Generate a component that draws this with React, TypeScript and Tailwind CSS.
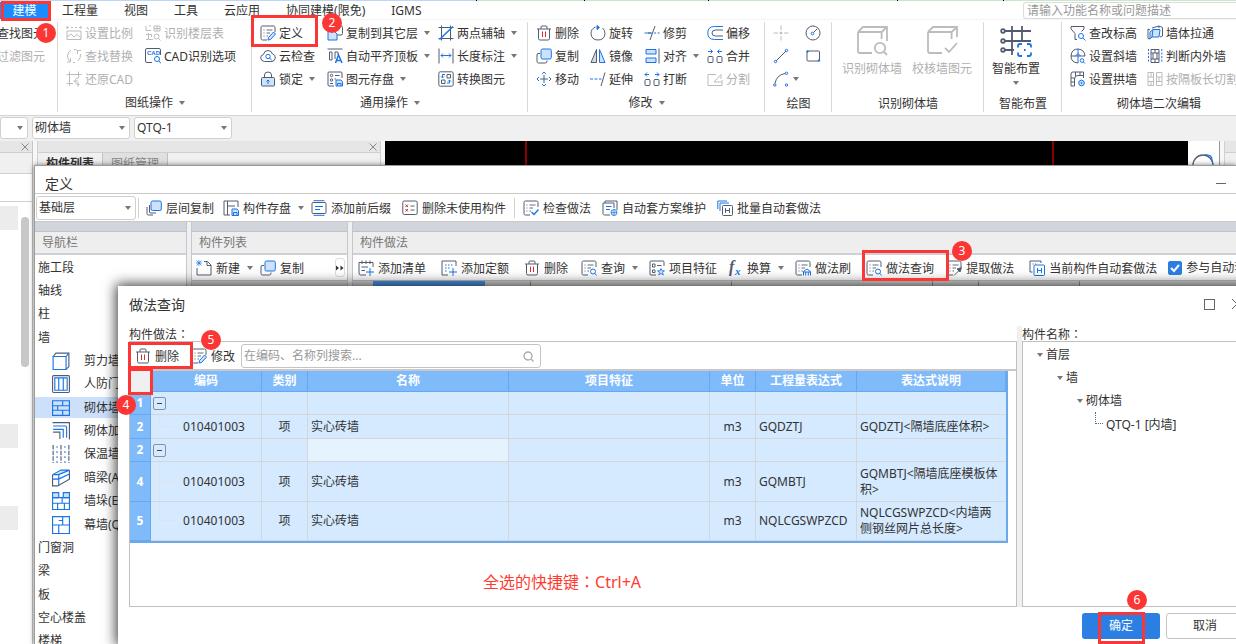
import React from "react";
import type { ReactNode } from "react";

const D = "#525c70";
const B = "#1a73e8";
const L = "#cfe2fb";
const G = "#bcbcbc";
const R = "#e02b2b";

const listFrame = (
  <>
    <path d="M15 7V2.500Q15 1 13.500 1H2.500Q1 1 1 2.500V13.500Q1 15 2.500 15H7" stroke={D} />
    <path d="M3.500 5H4.500M6.500 5H12.500M3.500 8H4.500M6.500 8H10M3.500 11H4.500M6.500 11H8" stroke={D} strokeWidth="0.900" />
  </>
);

const magnifier = (
  <>
    <circle cx="11" cy="11" r="2.500" stroke={B} />
    <path d="M13 13L15.500 15.500" stroke={B} />
  </>
);

const icons: Record<string, ReactNode> = {
  scale: (
    <g stroke={G}>
      <path d="M1 1V4M15 1V4M1 2.500H3M5 2.500H7M9 2.500H11M13 2.500H15M1 6H15V14.500H1ZM1 12L5 9L8 12L11 9.500L15 13" />
    </g>
  ),
  replace: (
    <g stroke={G}>
      <path d="M5 2Q1.500 4 1.500 8Q1.500 11 4 13.500M4.500 10V14H1M8 1.500Q10 1.500 11.500 2.500M14.500 6Q15 10 12 13M15 2.500H11.500V6M7 14.500H9" />
    </g>
  ),
  restore: (
    <g stroke={G}>
      <path d="M3.500 0.500V15M12.500 0.500V7M0.500 3.500H15.500M0.500 12.500H7M13 6.500Q9 7 9 10Q9 13.500 13.500 13.500M7.500 10H12M12 15.500V11" />
    </g>
  ),
  floorTable: (
    <g stroke={G}>
      <path d="M1 1V5.500H6M4 1H6M9 1H15V6H9ZM12 1V6M9 3.500H15M3.500 8V14.500H8M1 9.500H6.500V12M1 14.500H3" />
      <circle cx="11.500" cy="11.500" r="2.500" />
      <path d="M13.500 13.500L15.500 15.500" />
    </g>
  ),
  cadOption: (
    <>
      <path d="M15.500 7V2Q15.500 0.500 14 0.500H2Q0.500 0.500 0.500 2V13Q0.500 14.500 2 14.500H7" stroke={D} />
      <text x="2" y="7" fontSize="6" fontWeight="700" fill={B} fontFamily="Liberation Sans, sans-serif">CAD</text>
      <circle cx="12" cy="11" r="2.500" stroke={B} />
      <path d="M14 13L16 15.500" stroke={B} />
    </>
  ),
  define: (
    <>
      {listFrame}
      <path d="M8 15L8.500 12.500L13.500 7L15.500 9L10.500 14.500Z" stroke={B} fill={L} />
    </>
  ),
  cloud: (
    <>
      <path d="M4.500 13.500Q0.700 13 0.700 9.800Q0.700 7 3.500 6.500Q4 2.500 8 2.500Q11.500 2.500 12.500 6Q15.500 6.800 15.300 10Q15 13 12 13.500Z" stroke={D} />
      <circle cx="8" cy="8.500" r="2.200" stroke={B} />
      <path d="M9.500 10L12 12.500" stroke={B} />
    </>
  ),
  lock: (
    <>
      <path d="M4.500 6.500V4Q4.500 1 8 1Q11.500 1 11.500 4V6.500" stroke={D} />
      <rect x="1.500" y="6.500" width="13" height="8.500" rx="1" stroke={D} fill={L} />
      <path d="M8 13V9.500M6.500 10.500L8 9L9.500 10.500" stroke={B} />
    </>
  ),
  copyTo: (
    <>
      <rect x="5.500" y="1" width="10" height="9" rx="1.500" stroke={D} />
      <path d="M1 6H7L10 9V15H1Z" stroke={B} fill={L} />
    </>
  ),
  alignTop: (
    <>
      <path d="M0.500 1H15.500" stroke={D} />
      <path d="M2.500 4H5V12H2.500ZM8 11V4H11V7" stroke={D} />
      <path d="M8.500 15L11.500 7L15 15M9.500 12.500H13.500" stroke={B} strokeWidth="1.500" />
    </>
  ),
  saveDisk: (
    <>
      <path d="M15 7V2Q15 1 14 1H2Q1 1 1 2V14Q1 15 2 15H7" stroke={D} />
      <circle cx="4.500" cy="4.500" r="1.200" stroke={D} />
      <circle cx="4.500" cy="9" r="1.200" stroke={D} />
      <path d="M8 4.500H12.500M7.500 8H9M3 12.500H6" stroke={D} />
      <path d="M9 9H14L15.500 10.500V15H9ZM10.500 15V12.500H14V15" stroke={B} fill={L} />
    </>
  ),
  axis: (
    <>
      <path d="M3.500 0.500V15.500M12.500 0.500V15.500M0.500 2.500H15.500M0.500 13.500H15.500" stroke={D} />
      <path d="M1.500 14.500L15 1.500" stroke={B} strokeWidth="1.500" />
    </>
  ),
  length: (
    <>
      <path d="M1 0.500V15.500M15 0.500V15.500" stroke={D} />
      <path d="M3 7.500H13M5 5.500L3 7.500L5 9.500M11 5.500L13 7.500L11 9.500" stroke={B} />
    </>
  ),
  convert: (
    <>
      <rect x="0.800" y="0.800" width="14.400" height="14.400" rx="1.500" stroke={D} />
      <path d="M9 3.500H12.500V7H9ZM3.500 9H7V12.500H3.500Z" stroke={D} />
      <path d="M7 3.500H4.500V6.500M3 5.500L4.500 7L6 5.500M9 12H11.500V9.500M10 10.500L11.500 9L13 10.500" stroke={B} />
    </>
  ),
  trash: (
    <>
      <path d="M1 4H15M5 4V2Q5 1 6 1H10Q11 1 11 2V4M2.500 4V13.500Q2.500 15 4 15H12Q13.500 15 13.500 13.500V4" stroke={D} />
      <path d="M6.500 6.500V12M9.500 6.500V12" stroke={R} />
    </>
  ),
  copy: (
    <>
      <path d="M4 5.500H2Q1 5.500 1 7V13.500Q1 15 2.500 15H9.500Q11 15 11 13V12.500" stroke={D} />
      <rect x="5" y="1" width="10.300" height="10" rx="1.500" stroke={B} fill={L} />
    </>
  ),
  move: (
    <>
      <path d="M8 4V12M4 8H12" stroke={D} />
      <path d="M6 3L8 1L10 3M6 13L8 15L10 13M3 6L1 8L3 10M13 6L15 8L13 10" stroke={B} />
    </>
  ),
  rotate: (
    <>
      <path d="M5.500 2Q1 3.800 1 8.500Q1.500 15 8 15Q14.500 15 15 8.500Q15 5 12.500 3" stroke={D} />
      <path d="M7 0.500L9.500 2.500L7 4.500Z" fill={B} stroke={B} />
    </>
  ),
  mirror: (
    <>
      <path d="M6.500 1.500V14.500H1Z" stroke={D} fill="#d5d9e0" />
      <path d="M9.500 1.500V14.500H15Z" stroke={B} fill={L} />
    </>
  ),
  trim: (
    <>
      <path d="M4 8H8M11 1L6 15" stroke={D} />
      <path d="M10 8H12M13.500 8H15.500M0.500 8H7" stroke={B} />
    </>
  ),
  extend: (
    <>
      <path d="M0 8H3M4.500 8H7.500M9 8H11.500" stroke={B} />
      <path d="M15 1.500L11 15" stroke={D} />
    </>
  ),
  alignRight: (
    <>
      <path d="M2 1.500H12V6H2ZM2 10H12V14.500H2Z" stroke={B} fill={L} />
      <path d="M15 0.500V15.500" stroke={D} />
    </>
  ),
  breakUp: (
    <>
      <rect x="1" y="8.500" width="5" height="6" rx="1" stroke={D} />
      <rect x="10" y="8.500" width="5" height="6" rx="1" stroke={D} />
      <path d="M1 3.500H5M3 1.500L1 3.500L3 5.500M11 3.500H15M13 1.500L15 3.500L13 5.500" stroke={B} />
    </>
  ),
  offset: (
    <>
      <path d="M16 1.500H7.500Q0.800 1.500 0.800 8Q0.800 14.500 7.500 14.500H16" stroke={B} />
      <path d="M16 5H8.500Q5 5 5 8Q5 11 8.500 11H16" stroke={D} />
    </>
  ),
  merge: (
    <>
      <rect x="1" y="8.500" width="5" height="6" rx="1" stroke={D} />
      <rect x="10" y="8.500" width="5" height="6" rx="1" stroke={D} />
      <path d="M1 3.500H5.500M3.500 1.500L5.500 3.500L3.500 5.500M10.500 3.500H15M12.500 1.500L10.500 3.500L12.500 5.500" stroke={B} />
    </>
  ),
  split: (
    <g stroke={G}>
      <path d="M9 3.500H1V14.500H15V9M7 11L14 3.500M7 11L14.500 11M14 3.500V8" />
    </g>
  ),
  point: (
    <g stroke={G}>
      <path d="M8 0.500V5M8 11V15.500M0.500 8H5M11 8H15.500" />
      <circle cx="8" cy="8" r="1" fill={G} />
    </g>
  ),
  circle: (
    <>
      <circle cx="8" cy="8" r="7" stroke={D} />
      <path d="M8.500 7.500L12 4" stroke={D} />
      <circle cx="7.500" cy="8.500" r="1.300" stroke={B} />
    </>
  ),
  line: (
    <>
      <path d="M3 13L13 3" stroke={D} />
      <circle cx="2.500" cy="13.500" r="1.200" stroke={B} />
      <circle cx="13.500" cy="2.500" r="1.200" stroke={B} />
    </>
  ),
  rect: (
    <>
      <rect x="2" y="3" width="12.500" height="10" rx="1" stroke={D} />
      <circle cx="2.500" cy="3.500" r="0.800" stroke={B} fill={B} />
      <circle cx="14" cy="12.500" r="0.800" stroke={B} fill={B} />
    </>
  ),
  arc: (
    <>
      <path d="M2 12.500Q3.500 4 12 2.500" stroke={D} />
      <circle cx="1.800" cy="14" r="1.200" stroke={B} />
      <circle cx="13.500" cy="2.300" r="1.200" stroke={B} />
      <circle cx="13.500" cy="14" r="1.200" stroke={B} />
    </>
  ),
  recogWall: (
    <g stroke={G} strokeWidth="0.900">
      <path d="M1 3.500L3.500 1H15.500V8M1 3.500H12.800M1 3.500V13Q1 14 2 14H8M12.800 7V3.500L15.500 1" />
      <circle cx="12" cy="11.500" r="2.600" />
      <path d="M14 13.500L15.500 15" />
    </g>
  ),
  checkWall: (
    <g stroke={G} strokeWidth="0.900">
      <path d="M1 3.500L3.500 1H15.500V6M1 3.500H12.800M1 3.500V13Q1 14 2 14H8M12.800 7V3.500L15.500 1M9.500 11.500L11.500 13.500L15.500 9" />
    </g>
  ),
  smart: (
    <>
      <g stroke={D} strokeWidth="0.900">
        <path d="M2.500 3H15.500M2.500 8H15.500M2.500 12.500H7M6 0.500V15M11 0.500V8" />
        <circle cx="1.500" cy="3" r="0.900" fill="#fff" />
        <circle cx="1.500" cy="8" r="0.900" fill="#fff" />
        <circle cx="1.500" cy="12.500" r="0.900" fill="#fff" />
      </g>
      <path d="M9 11.300V10.500Q9 9.500 10 9.500H11M13.500 9.500H14.500Q15.500 9.500 15.500 10.500V11.300M15.500 13.700V14.500Q15.500 15.500 14.500 15.500H13.500M11 15.500H10Q9 15.500 9 14.500V13.700M12 12.500H12.800" stroke={B} strokeWidth="0.900" />
    </>
  ),
  funnel: (
    <>
      <path d="M7 14.500H5V8.500L1 4V1.500H14V4L11.500 6.500" stroke={D} />
      {magnifier}
    </>
  ),
  slope: (
    <>
      <path d="M8 15Q1 14.500 1 8Q1.500 1 8 1Q14.500 1.500 15 8" stroke={D} />
      <path d="M1 8H15" stroke={D} />
      <path d="M8 1V15M5.500 8L8 5.500L10.500 8" stroke={B} />
      <circle cx="12" cy="12.500" r="1.800" stroke={B} fill="#fff" />
      <path d="M13.500 14L15 15.500" stroke={B} />
    </>
  ),
  arch: (
    <>
      <path d="M1 15V3Q1 1 3 1H13.500V7M4.500 15V8Q4.500 4.500 8 4.500H13.500M1 7H4.500M1 11H4.500M1 15H4.500M5.500 1V5M10 1V4.500" stroke={D} />
      <circle cx="11.500" cy="12" r="2.800" stroke={B} fill={L} />
      <circle cx="11.500" cy="12" r="0.600" stroke={B} />
    </>
  ),
  wallThrough: (
    <>
      <path d="M3 5L1 4V13.500L3 14M12 3V1L15.500 2.500V11L13 12M5 3L12 1" stroke={D} />
      <path d="M3 7L6 4.500H13L12 12H5L3 14ZM6 4.500L5 12" stroke={B} fill={L} />
    </>
  ),
  judge: (
    <>
      <path d="M4 1.500H12V14.500H4ZM4 5H12M4 11H12M8 1.500V5M8 11V14.500M6 5V11M10 5V11" stroke={D} />
      <path d="M1.500 1V15M14.800 1V15" stroke={B} strokeDasharray="2 1.500" />
    </>
  ),
  cutLength: (
    <g stroke={G}>
      <path d="M1 1.500H6.500V14.500H1ZM9.500 1.500H15V14.500H9.500ZM1 6H6.500M1 10.500H6.500M9.500 6H15M9.500 10.500H15M4 1.500V6M12 6V10.500M4 10.500V14.500" />
    </g>
  ),
  layerCopy: (
    <>
      <path d="M3.500 5V12Q3.500 13 5 13H10M1 7V13.500Q1 15 2.500 15H7" stroke={D} />
      <rect x="5" y="1" width="10.300" height="9.500" rx="1.500" stroke={B} fill={L} />
    </>
  ),
  compSave: (
    <>
      <path d="M15 7V1H1V15H7M4.500 1V15M4.500 6H12" stroke={D} />
      <path d="M9 9H14L15.500 10.500V15.500H9ZM10.500 15V12.500H14V15" stroke={B} fill={L} />
    </>
  ),
  prefix: (
    <>
      <rect x="1" y="2.500" width="14" height="11" rx="1" stroke={D} />
      <path d="M2.500 0.700H13.500M2.500 15.300H13.500M4 6.500H12M4 9.500H9" stroke={B} />
    </>
  ),
  delUnused: (
    <>
      <rect x="0.800" y="1" width="14.400" height="13.500" rx="1.500" stroke={D} />
      <path d="M3.500 4.500L6 7M6 4.500L3.500 7M3.500 9L6 11.500M6 9L3.500 11.500" stroke={R} />
      <path d="M8.500 6H12.500M8.500 10H12.500" stroke={D} />
    </>
  ),
  checkMethod: (
    <>
      {listFrame}
      <path d="M8.500 12L11 14.500L15.500 9.500" stroke={B} strokeWidth="1.400" />
    </>
  ),
  autoPlan: (
    <>
      <path d="M3 3V1H15V10M8 15H2.500Q1 15 1 13.500V3H12V8" stroke={D} />
      <path d="M4 6.500H9.500M4 9.500H8" stroke={B} />
      <circle cx="12" cy="12.500" r="3" stroke={B} fill={L} strokeWidth="0.800" />
      <path d="M9 12.500H15M12 9.500V15.500" stroke={B} strokeWidth="0.600" />
    </>
  ),
  batch: (
    <>
      <path d="M0.800 9V1H10M3 11V3H12" stroke={B} />
      <rect x="5.500" y="5.500" width="10" height="10" rx="1" stroke={D} />
      <path d="M8.500 8V13M12.500 8V13M8.500 10.500H12.500" stroke={D} />
    </>
  ),
  newFile: (
    <>
      <path d="M8 1.500H11.500L15 5V15H1V8M11 1.500V5.500H15" stroke={D} />
      <path d="M0.500 0.500L5.500 5.500M5.500 0.500L0.500 5.500M3 0V6M0 3H6" stroke={B} strokeWidth="0.700" />
    </>
  ),
  addList: (
    <>
      <path d="M8 15H2.500Q1 15 1 13V2.500H15V7M4 0.500V4M8 0.500V4M12 0.500V4M3.500 7H10M3.500 10.500H7" stroke={D} />
      <path d="M12 8V16M8 12H16" stroke={B} />
    </>
  ),
  addQuota: (
    <>
      <path d="M7 15H1V1H15V6" stroke={D} />
      <path d="M4 5H12M4 8H9M4 11H7" stroke={B} strokeDasharray="1.500 1.500" />
      <path d="M12 8V16M8 12H16" stroke={B} />
    </>
  ),
  query: (
    <>
      {listFrame}
      <circle cx="12" cy="11.500" r="2.500" stroke={B} fill="#fff" />
      <path d="M14 13.500L15.500 15.500" stroke={B} />
    </>
  ),
  feature: (
    <>
      <path d="M15 6V2Q15 1 14 1H2Q1 1 1 2V14Q1 15 2 15H7M3.500 4H6V7H3.500ZM3.500 10H6V12.500H3.500ZM8 5.500H12.500" stroke={D} />
      <path d="M12 8.500L13 10.800H15.500L13.500 12.300L14.300 15L12 13.500L9.700 15L10.500 12.300L8.500 10.800H11Z" stroke={B} fill={L} strokeWidth="0.800" />
    </>
  ),
  fx: (
    <>
      <text x="2" y="12" fontSize="16" fontStyle="italic" fontWeight="700" fill={D} fontFamily="Liberation Serif, serif">f</text>
      <text x="8" y="15" fontSize="11" fontStyle="italic" fontWeight="700" fill={B} fontFamily="Liberation Serif, serif">x</text>
    </>
  ),
  brush: (
    <>
      {listFrame}
      <path d="M8.500 15.500V11.500L12 9L15.500 11.500V15.500M8.500 12H15.500M10.700 12V15.500M13.300 12V15.500" stroke={B} />
    </>
  ),
  extract: (
    <>
      {listFrame}
      <path d="M8 15.500L12.500 11M11 9L14 12L15.500 7.500Z" stroke={D} fill={D} />
    </>
  ),
  currentAuto: (
    <>
      <path d="M3.500 12H1V1H12V3M3.500 4H4.500M6 4H7" stroke={D} />
      <rect x="5" y="5" width="10.500" height="10.500" rx="1" stroke={B} fill="#fff" />
      <path d="M8.500 8V13M12.500 8V13M8.500 10.500H12.500" stroke={B} />
    </>
  ),
  shearWall: (
    <>
      <path d="M1 4L3.500 1H15V13L12.500 15.500" stroke={D} />
      <path d="M1 4H12.500V15.500H1ZM12.500 4L15 1" stroke={B} />
    </>
  ),
  civilWall: (
    <>
      <rect x="0.500" y="0.500" width="15" height="15" rx="1" stroke={D} />
      <path d="M2.500 2.500H13.500V13.500H2.500ZM6 2.500V13.500M10 2.500V13.500" stroke={B} />
    </>
  ),
  masonry: (
    <path d="M0.500 1.500H15.500V14.500H0.500ZM0.500 6H15.500M0.500 10H15.500M9.500 1.500V6M5 6V10M9.500 10V14.500" stroke={B} />
  ),
  masonryBar: (
    <>
      <path d="M0.500 0.500H15.500V15.500" stroke={D} />
      <path d="M1 3.500H12Q13 3.500 13 5V14M1 6.500H10V14" stroke={B} />
      <path d="M1 9H7V15" stroke={D} />
    </>
  ),
  insulation: (
    <>
      <path d="M1 0V16M8 0V16M15 0V16" stroke={D} strokeDasharray="4 1" />
      <path d="M4.500 1V16M11.500 1V16" stroke={B} strokeDasharray="1.500 3" />
    </>
  ),
  hiddenBeam: (
    <>
      <path d="M0.500 5V15H5L15.500 9V1" stroke={D} />
      <path d="M0.500 5L8 1H15.500L6 5ZM0.500 9H6L15.500 4.500M6 5V15" stroke={B} fill={L} />
    </>
  ),
  pier: (
    <>
      <path d="M0.500 0.500H6V5H0.500ZM10 0.500H15.500V5H10Z" fill={L} stroke={B} />
      <path d="M0.500 5H15.500V15.500H0.500ZM0.500 10H15.500M9 5V10M5 10V15.500M11 10V15.500" stroke={B} />
    </>
  ),
  curtain: (
    <path d="M0.500 0.500H15.500V15.500H0.500ZM0.500 8H15.500M9.500 0.500V8M6 8V15.500M6 4H9.500" stroke={B} />
  ),
};

const Icon = ({ name, className = "size-4" }: { name: string; className?: string }) => (
  <svg viewBox="0 0 16 16" fill="none" strokeWidth="1" className={`shrink-0 ${className}`} aria-hidden="true">
    {icons[name]}
  </svg>
);

const Arrow = ({ className = "" }: { className?: string }) => (
  <svg viewBox="0 0 6 4" className={`h-1 w-1.5 shrink-0 ${className}`} fill="#777" aria-hidden="true">
    <path d="M0 0H6L3 4Z" />
  </svg>
);

type Tool = { icon?: string; label: string; off?: boolean; menu?: boolean; gap?: string };

const RibbonButton = ({ icon, label, off, menu }: Tool) => (
  <button
    type="button"
    disabled={off}
    className={`flex h-[23px] items-center whitespace-nowrap ${off ? "text-[#b0b0b0]" : "text-[#333]"}`}
  >
    {icon && <Icon name={icon} />}
    <span className="mt-0.5 ml-[3px]">{label}</span>
    {menu && <Arrow className="ml-1.5" />}
  </button>
);

type Column = { width: string; items: Tool[] };

const drawing: Column[] = [
  {
    width: "w-[79px]",
    items: [
      { icon: "scale", label: "设置比例", off: true },
      { icon: "replace", label: "查找替换", off: true },
      { icon: "restore", label: "还原CAD", off: true },
    ],
  },
  {
    width: "w-[100px]",
    items: [
      { icon: "floorTable", label: "识别楼层表", off: true },
      { icon: "cadOption", label: "CAD识别选项" },
    ],
  },
];

const common: Column[] = [
  {
    width: "w-[67px]",
    items: [
      { icon: "define", label: "定义" },
      { icon: "cloud", label: "云检查" },
      { icon: "lock", label: "锁定", menu: true },
    ],
  },
  {
    width: "w-[111px]",
    items: [
      { icon: "copyTo", label: "复制到其它层", menu: true },
      { icon: "alignTop", label: "自动平齐顶板", menu: true },
      { icon: "saveDisk", label: "图元存盘", menu: true },
    ],
  },
  {
    width: "w-[84px]",
    items: [
      { icon: "axis", label: "两点辅轴", menu: true },
      { icon: "length", label: "长度标注", menu: true },
      { icon: "convert", label: "转换图元" },
    ],
  },
];

const modify: Column[] = [
  {
    width: "w-[54px]",
    items: [
      { icon: "trash", label: "删除" },
      { icon: "copy", label: "复制" },
      { icon: "move", label: "移动" },
    ],
  },
  {
    width: "w-[54px]",
    items: [
      { icon: "rotate", label: "旋转" },
      { icon: "mirror", label: "镜像" },
      { icon: "extend", label: "延伸" },
    ],
  },
  {
    width: "w-[63px]",
    items: [
      { icon: "trim", label: "修剪" },
      { icon: "alignRight", label: "对齐", menu: true },
      { icon: "breakUp", label: "打断" },
    ],
  },
  {
    width: "w-[50px]",
    items: [
      { icon: "offset", label: "偏移" },
      { icon: "merge", label: "合并" },
      { icon: "split", label: "分割", off: true },
    ],
  },
];

const masonryEdit: Column[] = [
  {
    width: "w-[77px]",
    items: [
      { icon: "funnel", label: "查改标高" },
      { icon: "slope", label: "设置斜墙" },
      { icon: "arch", label: "设置拱墙" },
    ],
  },
  {
    width: "w-[110px]",
    items: [
      { icon: "wallThrough", label: "墙体拉通" },
      { icon: "judge", label: "判断内外墙" },
      { icon: "cutLength", label: "按隔板长切割", off: true },
    ],
  },
];

const Group = ({
  width,
  label,
  menu,
  children,
}: {
  width: string;
  label: string;
  menu?: boolean;
  children: ReactNode;
}) => (
  <section className={`relative flex shrink-0 flex-col pl-2 ${width}`}>
    <div className="flex h-[70px] pt-px">{children}</div>
    <div className={`flex h-6 items-center justify-center pr-2 text-[#333] ${menu ? "pt-0.5" : "pt-1"}`}>
      {label}
      {menu && <Arrow className="ml-1.5" />}
    </div>
    <div className="absolute top-0.5 right-0 h-[90px] w-px bg-[#d9d9d9]" />
  </section>
);

const Columns = ({ columns }: { columns: Column[] }) => (
  <>
    {columns.map((col, i) => (
      <div key={i} className={`flex shrink-0 flex-col ${col.width}`}>
        {col.items.map((item) => (
          <RibbonButton key={item.label} {...item} />
        ))}
      </div>
    ))}
  </>
);

const BigButton = ({ icon, label, off, menu }: Tool) => (
  <button
    type="button"
    disabled={off}
    className={`flex flex-col items-center pt-1 whitespace-nowrap ${off ? "text-[#b0b0b0]" : "text-[#333]"}`}
  >
    <Icon name={icon!} className="size-8" />
    <span className="mt-0.5 leading-5">{label}</span>
    {menu && <Arrow className="mt-0.5" />}
  </button>
);

const DrawButton = ({ icon, label, menu }: Tool) => (
  <button type="button" aria-label={label} className="flex h-[23px] items-center">
    <Icon name={icon!} />
    {menu && <Arrow className="ml-1" />}
  </button>
);

const SelectBox = ({ label, value, className }: { label: string; value: string; className: string }) => (
  <div className={`relative shrink-0 ${className}`}>
    <select
      aria-label={label}
      defaultValue={value}
      className="block h-full w-full appearance-none rounded-[3px] border border-[#d0d0d0] bg-white pl-0.5 text-[#333]"
    >
      <option>{value}</option>
    </select>
    <Arrow className="pointer-events-none absolute top-1/2 right-[5px] -mt-0.5" />
  </div>
);

const menuTabs = ["工程量", "视图", "工具", "云应用", "协同建模(限免)", "IGMS"];

const Ribbon = () => (
  <header className="shrink-0">
    <div className="flex h-px bg-[#c8e6c9]">
      <div className="w-[476px] bg-[#bcd6f5]" />
      <div className="w-[108px] border-l border-black" />
      <div className="w-[124px] border-l border-black" />
      <div className="w-[189px] border-l border-black" />
      <div className="w-[106px] border-l border-black" />
      <div className="flex-1 border-l border-black" />
    </div>
    <div className="flex h-[19px] items-center justify-between border-b border-[#f3f3f3]">
      <nav className="flex h-full pt-px">
        <button type="button" className="h-full w-[49px] bg-[#1a8cff] text-white">
          建模
        </button>
        {menuTabs.map((tab) => (
          <button key={tab} type="button" className="h-full px-[13px] text-[#333]">
            {tab}
          </button>
        ))}
      </nav>
      <input
        aria-label="搜索功能"
        placeholder="请输入功能名称或问题描述"
        className="h-[17px] w-[213px] rounded-l-[3px] border border-r-0 border-[#dcdcdc] bg-white pl-[3px] placeholder:text-[#999]"
      />
    </div>
    <div className="flex h-24 overflow-hidden border-b border-[#d4d4d4]">
      <section className="relative w-[58px] shrink-0 pt-px">
        <div className="-ml-1.5 flex flex-col">
          <RibbonButton label="查找图元" />
          <RibbonButton label="过滤图元" off />
        </div>
        <div className="absolute top-0.5 right-0 h-[90px] w-px bg-[#d9d9d9]" />
      </section>
      <Group width="w-[194px]" label="图纸操作" menu>
        <Columns columns={drawing} />
      </Group>
      <Group width="w-[276px]" label="通用操作" menu>
        <Columns columns={common} />
      </Group>
      <Group width="w-[237px]" label="修改" menu>
        <Columns columns={modify} />
      </Group>
      <Group width="w-[67px]" label="绘图">
        <div className="flex w-8 flex-col">
          <DrawButton icon="point" label="点" />
          <DrawButton icon="line" label="直线" />
          <DrawButton icon="arc" label="圆弧" menu />
        </div>
        <div className="flex flex-col">
          <DrawButton icon="circle" label="圆" />
          <DrawButton icon="rect" label="矩形" />
        </div>
      </Group>
      <Group width="w-[152px]" label="识别砌体墙">
        <div className="flex items-start gap-2.5 pl-0.5">
          <BigButton icon="recogWall" label="识别砌体墙" off />
          <BigButton icon="checkWall" label="校核墙图元" off />
        </div>
      </Group>
      <Group width="w-[78px]" label="智能布置">
        <BigButton icon="smart" label="智能布置" menu />
      </Group>
      <Group width="w-[194px]" label="砌体墙二次编辑">
        <Columns columns={masonryEdit} />
      </Group>
    </div>
    <div className="flex h-[25px] gap-1 bg-[#f0f0f0] pt-px">
      <SelectBox label="楼层" value="" className="h-[22px] w-7" />
      <SelectBox label="构件类型" value="砌体墙" className="h-[22px] w-[98px]" />
      <SelectBox label="构件" value="QTQ-1" className="h-[22px] w-[98px]" />
    </div>
  </header>
);

const CloseMark = () => (
  <svg viewBox="0 0 8 8" className="size-2" stroke="#888" aria-hidden="true">
    <path d="M0.500 0.500L7.500 7.500M7.500 0.500L0.500 7.500" />
  </svg>
);

const Workspace = () => (
  <main className="flex flex-1 overflow-hidden bg-[#f7f7f7]">
    <aside className="w-[33px] shrink-0 border-r border-[#c4c4c4] bg-white">
      <div className="flex h-3 items-center justify-end border-b border-[#cfcfcf] bg-[#e6e6e6] pr-[3px]">
        <CloseMark />
      </div>
      <div className="h-[21px] border-b border-[#cfcfcf] bg-[#f0f0f0]" />
      <div className="h-7 border-b border-[#cfcfcf]" />
      <div className="flex justify-between pr-[3px]">
        <div className="w-[18px] pt-1">
          <div className="h-6 bg-[#ececec]" />
          <div className="mt-[194px] h-6 bg-[#ececec]" />
          <div className="mt-[58px] h-6 bg-[#ececec]" />
        </div>
        <div className="mt-[15px] h-[150px] w-2 rounded-full bg-[#c8c8c8]" />
      </div>
    </aside>
    <section className="ml-1 w-[344px] shrink-0 border-x border-[#d0d0d0] bg-[#f0f0f0]">
      <div className="flex h-3 items-center justify-end border-b border-[#cfcfcf] bg-[#e6e6e6] pr-[3px]">
        <CloseMark />
      </div>
      <div className="flex h-[22px] leading-[22px]">
        <button type="button" className="w-[65px] border-r border-[#c0c0c0] font-bold text-[#333]">
          构件列表
        </button>
        <button type="button" className="w-[65px] border-r border-[#c0c0c0] bg-[#e0e0e0] text-[#888]">
          图纸管理
        </button>
      </div>
    </section>
    <div className="ml-1 flex flex-1 bg-black pl-[140px]">
      <div className="w-[529px] border-x-2 border-[#8b0000]" />
    </div>
    <div className="w-8 border-r border-[#999] bg-white pt-3 pl-1">
      <svg viewBox="0 0 22 22" className="size-[22px]" fill="none" strokeWidth="1.300" aria-hidden="true">
        <circle cx="11" cy="12" r="10" stroke={D} />
        <path d="M13 2Q21 1 20 9" stroke={B} />
      </svg>
    </div>
    <div className="ml-1 w-3 border-l border-[#d0d0d0] bg-[#f0f0f0]">
      <div className="h-3 border-b border-[#cfcfcf] bg-[#e6e6e6]" />
    </div>
  </main>
);

const ToolButton = ({ icon, label, menu, gap = "" }: Tool) => (
  <button type="button" className={`flex h-6 shrink-0 items-center whitespace-nowrap text-[#333] ${gap}`}>
    <Icon name={icon!} />
    <span className="mt-0.5 ml-1">{label}</span>
    {menu && <Arrow className="ml-[7px]" />}
  </button>
);

const methodTools: Tool[] = [
  { icon: "addList", label: "添加清单", gap: "ml-[5px]" },
  { icon: "addQuota", label: "添加定额", gap: "ml-[15px]" },
  { icon: "trash", label: "删除", gap: "ml-[15px]" },
  { icon: "query", label: "查询", menu: true, gap: "ml-[13px]" },
  { icon: "feature", label: "项目特征", gap: "ml-[11px]" },
  { icon: "fx", label: "换算", menu: true, gap: "ml-2.5" },
  { icon: "brush", label: "做法刷", gap: "ml-[11px]" },
  { icon: "query", label: "做法查询", gap: "ml-[15px]" },
  { icon: "extract", label: "提取做法", gap: "ml-3" },
  { icon: "currentAuto", label: "当前构件自动套做法", gap: "ml-[15px]" },
];

const PanelTitle = ({ children }: { children: ReactNode }) => (
  <>
    <div className="h-2.5 border-b border-[#bfc2c8] bg-[#d1d4db]" />
    <h2 className="h-[23px] border-b-2 border-[#cdd0d5] bg-[#eee] pl-[7px] leading-[22px] text-[#777]">
      {children}
    </h2>
  </>
);

const wallTypes = [
  { icon: "shearWall", label: "剪力墙(Q)" },
  { icon: "civilWall", label: "人防门框墙" },
  { icon: "masonry", label: "砌体墙(Q)" },
  { icon: "masonryBar", label: "砌体加筋(Y)" },
  { icon: "insulation", label: "保温墙(Q)" },
  { icon: "hiddenBeam", label: "暗梁(A)" },
  { icon: "pier", label: "墙垛(E)" },
  { icon: "curtain", label: "幕墙(Q)" },
];

const NavText = ({ children }: { children: ReactNode }) => (
  <li className="flex items-center pl-[3px]">{children}</li>
);

const DefineWindow = () => (
  <div className="absolute top-[165px] right-0 bottom-0 left-[34px] flex flex-col overflow-hidden border-t border-l border-[#9c9c9c] bg-white shadow-[0_0_5px_rgba(0,0,0,0.5)]">
    <div className="flex h-7 shrink-0 items-center justify-between border-b border-[#c9c9c9] pt-2 pr-2.5 pl-2.5">
      <h1 className="text-sm leading-5 text-[#333]">定义</h1>
      <button type="button" aria-label="最小化" className="flex h-4 items-center">
        <span className="h-px w-2.5 bg-[#666]" />
      </button>
    </div>
    <div className="flex h-7 shrink-0 items-center border-b border-[#c9c9c9] pl-px">
      <SelectBox label="楼层选择" value="基础层" className="h-6 w-[100px]" />
      <div className="mx-0.5 h-5 w-px bg-[#d0d0d0]" />
      <ToolButton icon="layerCopy" label="层间复制" gap="ml-[5px]" />
      <ToolButton icon="compSave" label="构件存盘" menu gap="ml-[9px]" />
      <ToolButton icon="prefix" label="添加前后缀" gap="ml-[7px]" />
      <ToolButton icon="delUnused" label="删除未使用构件" gap="ml-[11px]" />
      <div className="ml-2 h-5 w-px bg-[#d0d0d0]" />
      <ToolButton icon="checkMethod" label="检查做法" gap="ml-2" />
      <ToolButton icon="autoPlan" label="自动套方案维护" gap="ml-[11px]" />
      <ToolButton icon="batch" label="批量自动套做法" gap="ml-[11px]" />
    </div>
    <div className="flex flex-1 gap-1 overflow-hidden bg-[#f0f0f0]">
      <nav className="w-[152px] shrink-0 border-r border-[#c4c7cc] bg-white">
        <PanelTitle>导航栏</PanelTitle>
        <ul className="grid h-[398px] auto-rows-fr pt-px text-[#333]">
          <NavText>施工段</NavText>
          <NavText>轴线</NavText>
          <NavText>柱</NavText>
          <NavText>墙</NavText>
          {wallTypes.map((wall) => (
            <li
              key={wall.label}
              className={`flex items-center pl-[17px] whitespace-nowrap ${wall.icon === "masonry" ? "my-px bg-[#cce0fa]" : ""}`}
            >
              <Icon name={wall.icon} className="size-[18px]" />
              <span className="ml-[14px]">{wall.label}</span>
            </li>
          ))}
          <NavText>门窗洞</NavText>
          <NavText>梁</NavText>
          <NavText>板</NavText>
          <NavText>空心楼盖</NavText>
          <NavText>楼梯</NavText>
        </ul>
      </nav>
      <section className="w-[157px] shrink-0 border-x border-[#c4c7cc] bg-[#ddd]">
        <PanelTitle>构件列表</PanelTitle>
        <div className="flex h-[26px] items-center border-b border-[#c0c0c0] bg-white pr-0.5 pl-1">
          <ToolButton icon="newFile" label="新建" menu />
          <ToolButton icon="copy" label="复制" gap="ml-[7px]" />
          <button
            type="button"
            aria-label="更多"
            className="ml-auto flex h-[19px] w-2.5 items-center justify-center rounded-[3px] border border-[#ddd]"
          >
            <svg viewBox="0 0 8 6" className="h-1.5 w-2 shrink-0" fill="#333" aria-hidden="true">
              <path d="M0 0.500L3 3L0 5.500ZM4.500 0.500L7.500 3L4.500 5.500Z" />
            </svg>
          </button>
        </div>
      </section>
      <section className="flex-1 overflow-hidden border-l border-[#c4c7cc] bg-[#ddd]">
        <PanelTitle>构件做法</PanelTitle>
        <div className="flex h-[26px] items-center border-b border-[#c0c0c0] bg-white">
          {methodTools.map((tool) => (
            <ToolButton key={tool.label} {...tool} />
          ))}
          <label className="ml-[11px] flex shrink-0 items-center gap-1 whitespace-nowrap text-[#333]">
            <span className="relative flex size-3.5">
              <input
                type="checkbox"
                defaultChecked
                className="peer size-3.5 appearance-none rounded-[2px] border border-[#2b7fe3] checked:bg-[#2b7fe3]"
              />
              <svg
                viewBox="0 0 14 14"
                className="pointer-events-none absolute inset-0 hidden size-3.5 peer-checked:block"
                fill="none"
                stroke="#fff"
                strokeWidth="2"
              >
                <path d="M3 7L6 10L11 4" />
              </svg>
            </span>
            参与自动套
          </label>
        </div>
        <div className="flex h-6 pl-5">
          <div className="w-[112px] bg-[#4f9af0]" />
          <div className="w-[46px] border-r border-[#999]" />
          <div className="w-[201px] border-r border-[#999]" />
          <div className="w-[201px] border-r border-[#999]" />
          <div className="w-[46px] border-r border-[#999]" />
          <div className="w-[101px] border-r border-[#999]" />
        </div>
      </section>
    </div>
  </div>
);

type Row = {
  no: string;
  height: string;
  code?: string;
  unit?: string;
  name?: string;
  kind?: string;
  expr?: string;
  note?: string;
  last?: boolean;
};

const rows: Row[] = [
  { no: "1", height: "h-[23px]" },
  { no: "2", height: "h-6", code: "010401003", kind: "项", name: "实心砖墙", unit: "m3", expr: "GQDZTJ", note: "GQDZTJ<隔墙底座体积>", last: true },
  { no: "2", height: "h-[23px]" },
  { no: "4", height: "h-10", code: "010401003", kind: "项", name: "实心砖墙", unit: "m3", expr: "GQMBTJ", note: "GQMBTJ<隔墙底座模板体积>" },
  { no: "5", height: "h-[39px]", code: "010401003", kind: "项", name: "实心砖墙", unit: "m3", expr: "NQLCGSWPZCD", note: "NQLCGSWPZCD<内墙两侧钢丝网片总长度>", last: true },
];

const headers = ["编码", "类别", "名称", "项目特征", "单位", "工程量表达式", "表达式说明"];

const cell = "border-r border-b border-[#d3d7dc] p-0";

const MethodTable = () => (
  <table className="w-[878px] table-fixed border-separate border-spacing-0 border-r-2 border-b-2 border-[#6aa9ec] bg-[#d5eaff] text-[#333]">
    <colgroup>
      <col className="w-[21px]" />
      <col className="w-[111px]" />
      <col className="w-[46px]" />
      <col className="w-[201px]" />
      <col className="w-[201px]" />
      <col className="w-[46px]" />
      <col className="w-[101px]" />
      <col />
    </colgroup>
    <thead>
      <tr className="h-[21px]">
        <th className="bg-[#f0f0f0] p-0">
          <button type="button" aria-label="全选" className="block size-full" />
        </th>
        {headers.map((h) => (
          <th key={h} className="border-r border-b border-[#66a8f0] bg-[#7fbafb] p-0 font-bold text-white">
            {h}
          </th>
        ))}
      </tr>
    </thead>
    <tbody>
      {rows.map((row, i) => (
        <tr key={i} className={row.height}>
          <th className="border-r border-b border-[#66a8f0] bg-[#7fbafb] p-0 font-bold text-white">{row.no}</th>
          <td className={`relative ${cell}`}>
            {row.code ? (
              <>
                <span className="absolute top-0 left-2 h-1/2 w-4 border-b border-l border-[#dde3ea]" />
                {!row.last && <span className="absolute bottom-0 left-2 h-1/2 w-px bg-[#dde3ea]" />}
                <div className="pl-4 text-center">{row.code}</div>
              </>
            ) : (
              <button
                type="button"
                aria-label="折叠"
                className="ml-0.5 flex size-[13px] items-center justify-center rounded-[2px] border border-[#8391a3]"
              >
                <span className="h-px w-[5px] bg-[#444]" />
              </button>
            )}
          </td>
          <td className={`text-center ${cell}`}>{row.kind}</td>
          <td className={`${cell} ${i === 2 ? "bg-[#e5f3ff]" : ""}`}>
            <div className="pl-[3px]">{row.name}</div>
          </td>
          <td className={cell} />
          <td className={`text-center ${cell}`}>{row.unit}</td>
          <td className={cell}>
            <div className="pl-[3px]">{row.expr}</div>
          </td>
          <td className="border-b border-[#d3d7dc] p-0">
            <div className="pr-1.5 pl-[3px] leading-4">{row.note}</div>
          </td>
        </tr>
      ))}
    </tbody>
  </table>
);

// full-width colon sits in the middle of its box in the TC face
const Colon = () => <span className="font-['Noto_Sans_CJK_TC',sans-serif]">：</span>;

const TreeNode = ({ label, indent }: { label: string; indent: string }) => (
  <li className={`flex h-[23px] items-center gap-[3px] ${indent}`}>
    <Arrow />
    {label}
  </li>
);

const QueryWindow = () => (
  <div className="absolute top-[286px] -right-3 bottom-0 left-[118px] flex flex-col bg-white pl-[11px] shadow-[0_0_12px_2px_rgba(0,0,0,0.75)]">
    <div className="flex h-10 shrink-0 items-center justify-between pr-1.5">
      <h1 className="pb-0.5 text-sm leading-5 text-[#333]">做法查询</h1>
      <div className="flex items-center gap-[17px] pb-1">
        <button type="button" aria-label="最大化" className="size-[11px] border border-[#666]" />
        <button type="button" aria-label="关闭">
          <svg viewBox="0 0 10 10" className="size-2.5" stroke="#666" aria-hidden="true">
            <path d="M0 0L10 10M10 0L0 10" />
          </svg>
        </button>
      </div>
    </div>
    <div className="flex h-[281px] shrink-0">
      <section className="flex min-w-0 flex-1 flex-col">
        <h2 className="h-[15px] leading-[15px] text-[#333]">
          构件做法
          <Colon />
        </h2>
        <div className="flex-1 border border-[#c0c0c0]">
          <div className="flex h-[29px] items-center border-b-2 border-[#c8c8c8]">
            <ToolButton icon="trash" label="删除" gap="ml-[5px]" />
            <ToolButton icon="define" label="修改" gap="ml-3" />
            <div className="relative ml-1.5">
              <input
                aria-label="搜索"
                placeholder="在编码、名称列搜索..."
                className="block h-6 w-[300px] rounded-[3px] border border-[#c4c4c4] pl-0.5 placeholder:text-[#999]"
              />
              <svg
                viewBox="0 0 11 11"
                className="absolute top-[7px] right-[7px] size-[11px]"
                fill="none"
                stroke="#aaa"
                strokeWidth="1.300"
                aria-hidden="true"
              >
                <circle cx="5" cy="5" r="4" />
                <path d="M8 8L10.500 10.500" />
              </svg>
            </div>
          </div>
          <MethodTable />
          <p className="mt-[26px] pl-[353px] text-base leading-6 text-[#ff3b30]">
            全选的快捷键
            <Colon />
            Ctrl+A
          </p>
        </div>
      </section>
      <div className="w-[5px] shrink-0 bg-[#f0f0f0]" />
      <aside className="flex w-[226px] shrink-0 flex-col">
        <h2 className="h-[15px] leading-[15px] text-[#333]">
          构件名称
          <Colon />
        </h2>
        <div className="flex-1 border border-[#c0c0c0] pt-px">
          <ul className="text-[#333]">
            <TreeNode label="首层" indent="pl-[14px]" />
            <TreeNode label="墙" indent="pl-[34px]" />
            <TreeNode label="砌体墙" indent="pl-[54px]" />
            <li className="flex h-6 items-center pl-[72px]">
              <span className="mb-3 h-3 w-2 border-b border-l border-dotted border-[#4a6a9a]" />
              <span className="mt-0.5 ml-[3px]">QTQ-1 [内墙]</span>
            </li>
          </ul>
        </div>
      </aside>
    </div>
    <div className="flex gap-1.5 self-end pt-1.5 pr-1">
      <button type="button" className="h-[26px] w-[78px] rounded-[3px] bg-[#2b7fe3] text-white">
        确定
      </button>
      <button type="button" className="h-[26px] w-[78px] rounded-[3px] border border-[#c4c4c4] text-[#333]">
        取消
      </button>
    </div>
  </div>
);

const frames = [
  "top-[1px] left-[1px] h-[20px] w-[50px]",
  "top-[15px] left-[251px] h-[32px] w-[67px]",
  "top-[250px] left-[862px] h-[31px] w-[87px]",
  "top-[342px] left-[128px] h-[27px] w-[65px]",
  "top-[368px] left-[128px] h-[27px] w-[25px]",
  "top-[612px] right-[91px] h-[32px] w-[47px]",
];

const badges = [
  "top-[23px] left-[36px]",
  "top-[13px] left-[322px]",
  "top-[241px] left-[952px]",
  "top-[395px] left-[116px]",
  "top-[330px] left-[201px]",
  "top-[590px] right-[89px]",
];

const Marks = () => (
  <div className="pointer-events-none absolute inset-0">
    {frames.map((place) => (
      <div key={place} className={`absolute border-[3px] border-[#fc3535] ${place}`} />
    ))}
    {badges.map((place, i) => (
      <div
        key={place}
        className={`absolute flex size-5 items-center justify-center rounded-full bg-[#fc3535] text-white ${place}`}
      >
        {i + 1}
      </div>
    ))}
  </div>
);

const App = () => {
  return (
    <div className="relative flex h-screen flex-col overflow-hidden bg-white font-['Noto_Sans','Noto_Sans_CJK_SC',sans-serif] text-xs">
      <Ribbon />
      <Workspace />
      <DefineWindow />
      <QueryWindow />
      <Marks />
    </div>
  );
};

export default App;
